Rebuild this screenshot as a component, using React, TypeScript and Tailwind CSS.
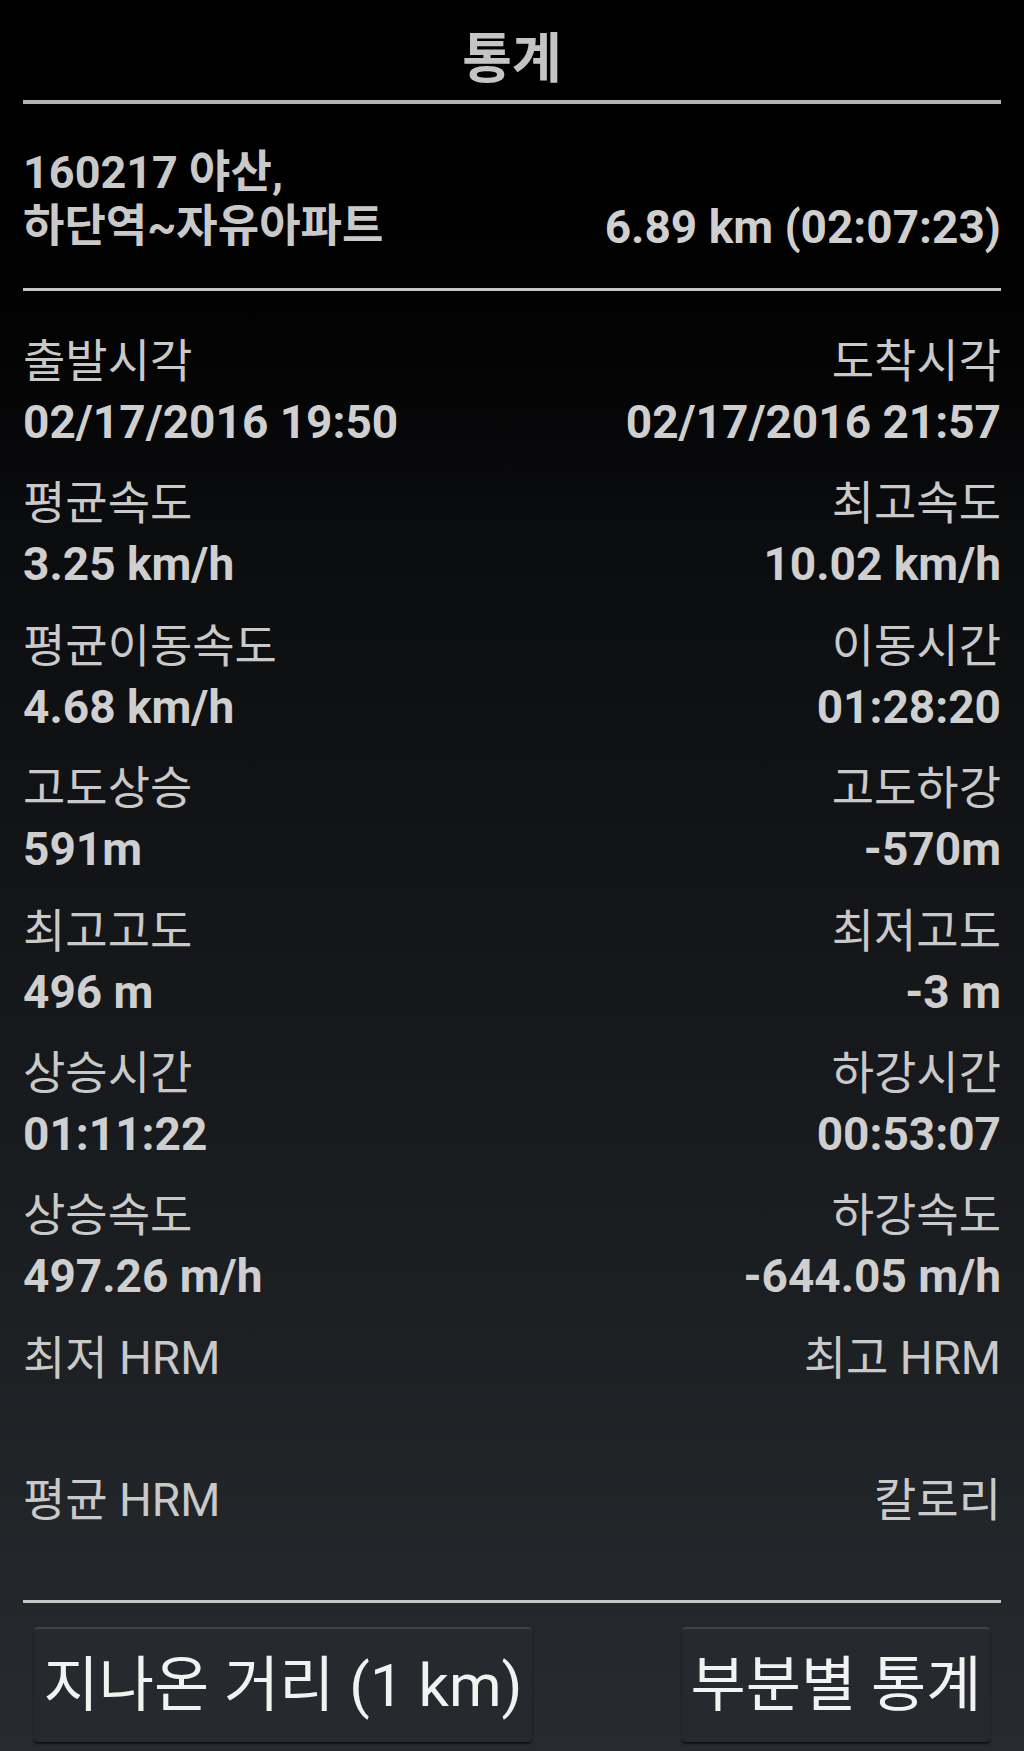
import React from "react";

const rows: [string, string, string, string][] = [
  ["출발시각", "02/17/2016 19:50", "도착시각", "02/17/2016 21:57"],
  ["평균속도", "3.25 km/h", "최고속도", "10.02 km/h"],
  ["평균이동속도", "4.68 km/h", "이동시간", "01:28:20"],
  ["고도상승", "591m", "고도하강", "-570m"],
  ["최고고도", "496 m", "최저고도", "-3 m"],
  ["상승시간", "01:11:22", "하강시간", "00:53:07"],
  ["상승속도", "497.26 m/h", "하강속도", "-644.05 m/h"],
  ["최저 HRM", "", "최고 HRM", ""],
  ["평균 HRM", "", "칼로리", ""],
];

function Cell({ label, value, right }: { label: string; value: string; right?: boolean }) {
  return (
    <div className={`flex flex-col ${right ? "items-end text-right" : "items-start text-left"}`}>
      <div className="h-[58px] text-[46px] leading-[58px] text-[#c9c9c9] whitespace-nowrap">{label}</div>
      <div className="h-[64px] text-[46px] leading-[64px] font-bold text-[#cfcfcf] whitespace-nowrap">{value}</div>
    </div>
  );
}

export default function App() {
  return (
    <div className="h-[1751px] w-[1024px] overflow-hidden bg-linear-to-b from-[#000000] via-[#0b0c0e] via-30% to-[#272b2f] font-[Roboto,'Noto_Sans_CJK_KR',sans-serif]">
      {/* Title */}
      <div className="h-[100px] pt-[30px] text-center text-[54px] leading-[60px] font-bold text-[#c4c4c4]">통계</div>
      <div className="mx-[23px] h-[4px] bg-[#b3b3b3]" />

      {/* Route */}
      <div className="flex items-end justify-between px-[23px] pt-[42px] pb-[34px] text-[45px] leading-[54px] font-bold text-[#c9c9c9]">
        <div className="flex flex-col">
          <div className="whitespace-nowrap">160217 야산,</div>
          <div className="whitespace-nowrap">하단역~자유아파트</div>
        </div>
        <div className="whitespace-nowrap text-[46px] text-[#cfcfcf]">6.89 km (02:07:23)</div>
      </div>
      <div className="mx-[23px] h-[3px] bg-[#c6c6c6]" />

      {/* Stats */}
      <div className="flex flex-col gap-[20.4px] px-[23px] pt-[41px]">
        {rows.map((r, i) => (
          <div key={i} className="flex h-[122px] justify-between">
            <Cell label={r[0]} value={r[1]} />
            <Cell label={r[2]} value={r[3]} right />
          </div>
        ))}
      </div>

      <div className="mx-[23px] mt-[7px] h-[3px] bg-[#c6c6c6]" />

      {/* Buttons */}
      <div className="mt-[24px] flex justify-between px-[34px]">
        <button className="flex h-[115px] w-[498px] items-center justify-center rounded-[4px] border-t-2 border-t-[#3d4247] bg-[#262a2f] text-[60px] font-normal text-[#f2f2f2] shadow-[0_2px_2px_rgba(0,0,0,0.6)] whitespace-nowrap">
          지나온 거리 (1 km)
        </button>
        <button className="flex h-[115px] w-[308px] items-center justify-center rounded-[4px] border-t-2 border-t-[#3d4247] bg-[#262a2f] text-[60px] font-normal text-[#f2f2f2] shadow-[0_2px_2px_rgba(0,0,0,0.6)] whitespace-nowrap">
          부분별 통계
        </button>
      </div>
    </div>
  );
}
